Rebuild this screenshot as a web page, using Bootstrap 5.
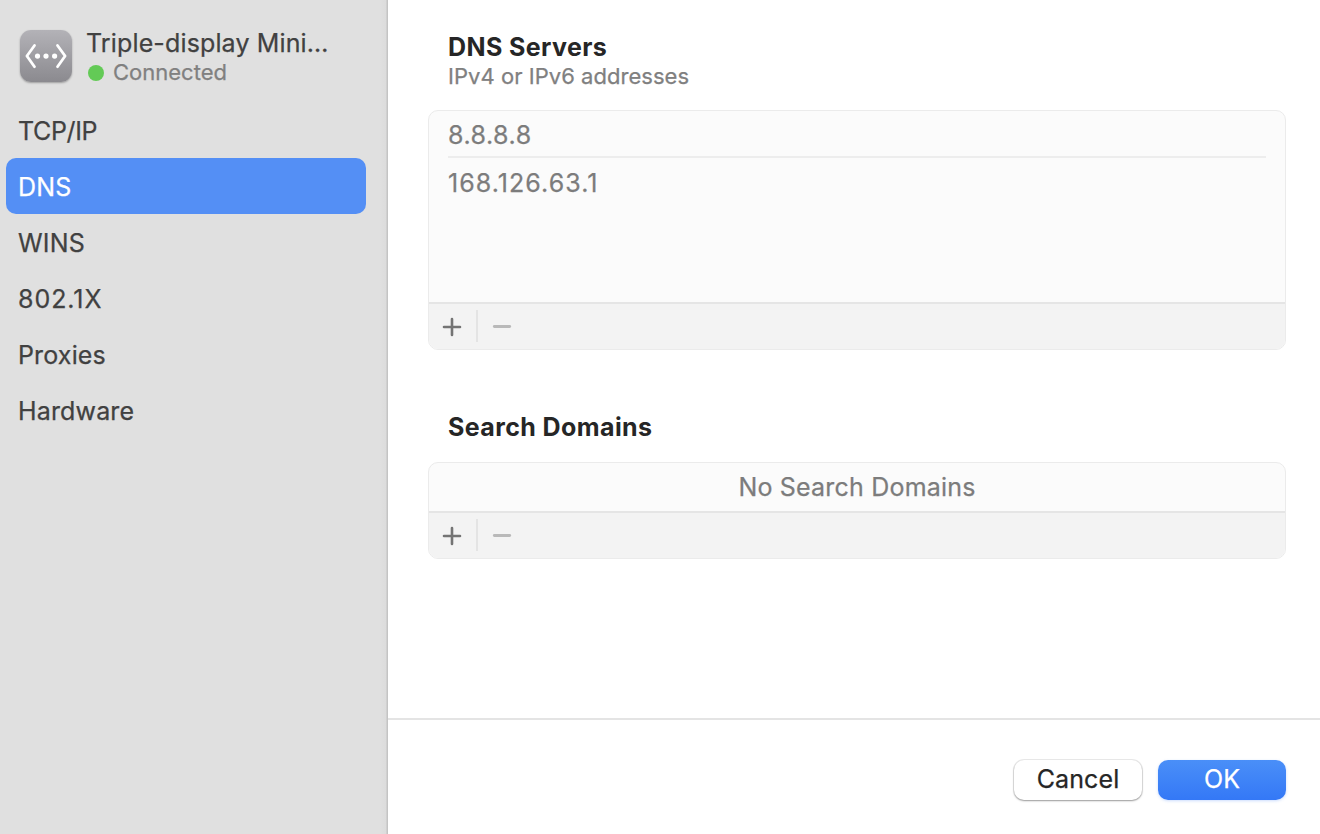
<!DOCTYPE html>
<html lang="en">
<head>
<meta charset="utf-8">
<meta name="viewport" content="width=device-width, initial-scale=1">
<title>Triple-display Mini – DNS</title>
<link href="https://cdn.jsdelivr.net/npm/bootstrap@5.3.0/dist/css/bootstrap.min.css" rel="stylesheet">
<style>
body{font-family:Inter,"Liberation Sans",sans-serif;font-size:25px;line-height:30px;color:#262626;background:#fff;-webkit-text-stroke:.25px}
.sidebar{width:388px;background:linear-gradient(to right,#e0e0e0 380px,#dcdcdc 386px,#c4c4c4 387px,#c4c4c4);color:#414141}
.device{padding:28px 0 0 20px;height:102px}
.device-icon{width:52px;height:52px;margin-top:2px;border-radius:11px;background:linear-gradient(#b3b2b7,#8b8a8f);box-shadow:0 1px 2px rgba(0,0,0,.3)}
.device-text{margin-left:14px}
.device-name{letter-spacing:.14px}
.status{font-size:22px;line-height:28px;color:#808080}
.status-dot{width:16px;height:16px;background:#63ca56;margin:1px 9px 0 2px}
.side-nav{width:360px;margin-left:6px}
.side-nav .nav-link{height:56px;padding:14px 12px 12px;color:#414141;border-radius:10px;letter-spacing:.15px}
.side-nav .nav-link.active{background:#548ff5;color:#fff}
.content{padding:31px 34px 0 40px}
.heading{font-size:25px;line-height:32px;font-weight:650;letter-spacing:.4px;margin:0 0 0 20px;-webkit-text-stroke:0}
.heading-domains{margin-top:61px}
.hint{font-size:22px;line-height:28px;height:27px;margin-top:-1px;color:#808080;margin-left:20px;letter-spacing:.04px}
.list-box{border:1px solid #ebebeb;border-radius:10px;background:#fbfbfb;color:#7c7c7c;overflow:hidden}
.servers{height:240px;margin-top:21px}
.domains{height:97px;margin-top:19px}
.entry{margin:0 19px;height:48px;padding-top:10px;letter-spacing:1.05px}
.entry:first-child{height:47px;padding-top:9px;border-bottom:2px solid #ededed;letter-spacing:.5px}
.empty-note{padding-top:9px;letter-spacing:.2px}
.side-nav .tight{letter-spacing:-.35px}
.side-nav .loose{letter-spacing:.95px}
.tools{height:47px;border-top:2px solid #e5e5e5;background:#f3f3f3}
.tools .btn{width:48px;height:45px;line-height:0;border:0;padding:0 2px 0 0}
.tools .tool-line+.btn{padding-right:0}
.tool-line{width:2px;height:32px;background:#e4e4e4;margin-top:6px;margin-left:-1px}
.footer-bar{height:116px;border-top:2px solid #e4e4e4;padding:40px 34px 0 0;gap:16px}
.footer-bar .btn{width:128px;height:40px;padding:0 0 2px;border:0;border-radius:10px;font-size:25px;line-height:36px}
.btn-cancel,.btn-cancel:hover{background:#fff;color:#262626;box-shadow:0 0 0 1px rgba(0,0,0,.08),0 1px 2px rgba(0,0,0,.35);letter-spacing:.1px}
.btn-ok,.btn-ok:hover{background:linear-gradient(#4a8ff8,#3478f6);color:#fff;box-shadow:0 1px 3px rgba(52,120,246,.25)}
</style>
</head>
<body class="overflow-hidden">
<div class="d-flex vh-100">
  <aside class="sidebar flex-shrink-0">
    <div class="device d-flex">
      <div class="device-icon flex-shrink-0">
        <svg class="d-block" width="52" height="52" viewBox="0 0 52 52" fill="none" stroke="#fff" stroke-width="2.8" stroke-linecap="round" stroke-linejoin="round"><path d="M14.5 15.5 6.9 26l7.6 10.7M37.5 15.5 45.1 26l-7.6 10.7"/><g fill="#fff" stroke="none"><circle cx="17.5" cy="26.1" r="2.6"/><circle cx="26" cy="26.1" r="2.6"/><circle cx="34.6" cy="26.1" r="2.6"/></g></svg>
      </div>
      <div class="device-text">
        <div class="device-name text-nowrap">Triple-display Mini…</div>
        <div class="status d-flex align-items-center"><i class="status-dot rounded-circle"></i><span>Connected</span></div>
      </div>
    </div>
    <nav class="nav nav-pills flex-column side-nav">
      <a class="nav-link tight" href="#">TCP/IP</a>
      <a class="nav-link active" href="#">DNS</a>
      <a class="nav-link" href="#">WINS</a>
      <a class="nav-link loose" href="#">802.1X</a>
      <a class="nav-link" href="#">Proxies</a>
      <a class="nav-link" href="#">Hardware</a>
    </nav>
  </aside>
  <main class="flex-grow-1 d-flex flex-column">
    <div class="content flex-grow-1">
      <h1 class="heading">DNS Servers</h1>
      <div class="hint">IPv4 or IPv6 addresses</div>
      <section class="list-box servers d-flex flex-column">
        <div class="flex-grow-1">
          <div class="entry">8.8.8.8</div>
          <div class="entry">168.126.63.1</div>
        </div>
        <div class="tools d-flex">
          <button class="btn" aria-label="Add"><svg width="20" height="20" viewBox="0 0 20 20" stroke="#747474" stroke-width="2.6" stroke-linecap="round"><path d="M2 10h16M10 2v16"/></svg></button>
          <div class="tool-line"></div>
          <button class="btn" aria-label="Remove"><svg width="20" height="20" viewBox="0 0 20 20" stroke="#b9b9b9" stroke-width="2.8" stroke-linecap="round"><path d="M2.3 9.5h15.4"/></svg></button>
        </div>
      </section>
      <h2 class="heading heading-domains">Search Domains</h2>
      <section class="list-box domains d-flex flex-column">
        <div class="empty-note flex-grow-1 text-center">No Search Domains</div>
        <div class="tools d-flex">
          <button class="btn" aria-label="Add"><svg width="20" height="20" viewBox="0 0 20 20" stroke="#747474" stroke-width="2.6" stroke-linecap="round"><path d="M2 10h16M10 2v16"/></svg></button>
          <div class="tool-line"></div>
          <button class="btn" aria-label="Remove"><svg width="20" height="20" viewBox="0 0 20 20" stroke="#b9b9b9" stroke-width="2.8" stroke-linecap="round"><path d="M2.3 9.5h15.4"/></svg></button>
        </div>
      </section>
    </div>
    <footer class="footer-bar d-flex justify-content-end">
      <button class="btn btn-cancel">Cancel</button>
      <button class="btn btn-ok">OK</button>
    </footer>
  </main>
</div>
<script src="https://cdn.jsdelivr.net/npm/bootstrap@5.3.0/dist/js/bootstrap.bundle.min.js"></script>
</body>
</html>
